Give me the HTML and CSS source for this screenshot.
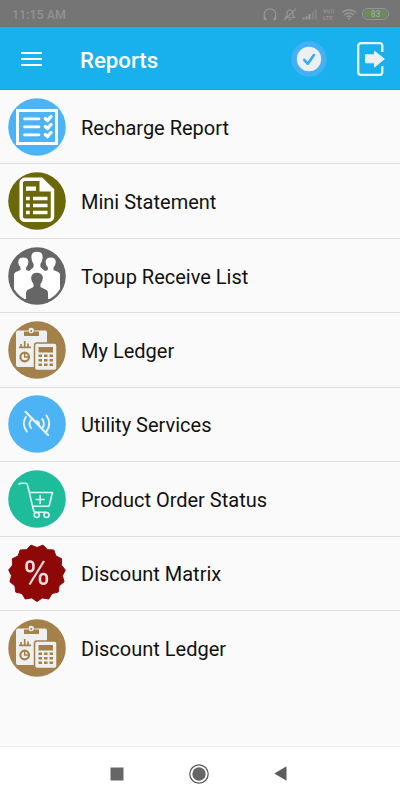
FILE: index.html
```html
<!DOCTYPE html>
<html lang="en">
<head>
    <meta charset="UTF-8">
    <meta name="viewport" content="width=device-width, initial-scale=1.0">
    <title>Reports</title>
    <link rel="stylesheet" href="styles.css">
</head>
<body>
    <!-- Shared icon used by both ledger rows -->
    <svg class="sprite" aria-hidden="true">
        <symbol id="icon-ledger" viewBox="0 0 58 58">
            <circle cx="29" cy="29" r="28.8" fill="#a4814b"/>
            <rect x="8" y="9.5" width="31" height="36.5" rx="2" fill="#ecf0f1"/>
            <path d="M16 10.5h4a3.3 3.3 0 0 1 6.500 0h4.500v4.500H16z" fill="#a4814b"/>
            <circle cx="23.200" cy="9.500" r="2.700" fill="#ecf0f1"/>
            <circle cx="23.200" cy="10" r="1" fill="#a4814b"/>
            <path d="M11 26.400h12M13 26v-3M16.700 26v-6M20 26v-3.500" stroke="#a4814b" stroke-width="1.700"/>
            <circle cx="16.700" cy="36" r="4.300" fill="none" stroke="#a4814b" stroke-width="2.200"/>
            <path d="M16.700 31v5h5" fill="none" stroke="#a4814b" stroke-width="1.500"/>
            <rect x="26.500" y="22" width="22.500" height="27.500" rx="2.500" fill="#ecf0f1" stroke="#a4814b" stroke-width="1.500"/>
            <rect x="30.500" y="26" width="14.500" height="5.500" fill="#a4814b"/>
            <path d="M30.500 34.800h14.500M30.500 39.300h14.500M30.500 43.800h14.500" stroke="#a4814b" stroke-width="2.500" stroke-dasharray="3.500 2"/>
        </symbol>
    </svg>

    <div class="screen">
        <div class="status-bar">
            <span class="clock">11:15 AM</span>
            <div class="status-icons">
                <svg class="headset" width="14" height="13" viewBox="0 0 14 13">
                    <path d="M1.300 9V6a5.700 5.200 0 0 1 11.400 0v3" fill="none" stroke="#969696" stroke-width="1.300"/>
                    <path d="M.8 8.500h1.500l1.700 3.700H1.500l-.9-1zM13.200 8.500h-1.500L10 12.200h2.500l.9-1z" fill="#969696"/>
                </svg>
                <svg width="14" height="13" viewBox="0 0 14 13">
                    <path d="M2.500 9.500L4 7.500V5a3 3 0 0 1 6 0v2.500l1.500 2zM5.500 11.500h3M13 .8L1 12.300" fill="none" stroke="#969696" stroke-width="1.200"/>
                </svg>
                <svg width="16" height="12" viewBox="0 0 16 12">
                    <path d="M1.500 11.500v-2M4.500 11.500V8.300M7.500 11.500V6" stroke="#999" stroke-width="2"/>
                    <path d="M10.700 11.500V3.500M13.800 11.500V1" stroke="#858585" stroke-width="2"/>
                </svg>
                <span class="volte">Vo))<br>LTE</span>
                <svg width="16" height="12" viewBox="0 0 16 12">
                    <path d="M1 4.500a10 10 0 0 1 14 0M3.300 7a6.700 6.700 0 0 1 9.400 0M5.600 9.200a3.500 3.500 0 0 1 4.800 0" fill="none" stroke="#989898" stroke-width="1.500"/>
                    <circle cx="8" cy="10.800" r="1" fill="#989898"/>
                </svg>
                <span class="battery"><span>83</span></span>
            </div>
        </div>

        <header class="app-bar">
            <button class="menu-btn" aria-label="Menu"><span></span><span></span><span></span></button>
            <h1>Reports</h1>
            <svg class="check" width="36" height="36" viewBox="0 0 36 36">
                <circle cx="18" cy="18" r="17.700" fill="#44b0f5"/>
                <circle cx="18" cy="18" r="12.200" fill="#ecf0f1"/>
                <path d="M13.300 19l3.600 3.800 6-8.800" fill="none" stroke="#35acf3" stroke-width="2.600" stroke-linecap="round" stroke-linejoin="round"/>
            </svg>
            <svg class="logout" width="28" height="34" viewBox="0 0 28 34">
                <path d="M25.300 10V3.700a2.500 2.500 0 0 0-2.500-2.500H4a2.800 2.800 0 0 0-2.800 2.800v26a2.800 2.800 0 0 0 2.800 2.800h18.800a2.500 2.500 0 0 0 2.500-2.500V24" fill="none" stroke="#e9f3f6" stroke-width="2.300"/>
                <path d="M8.500 12.800h9V9.300L27.300 17l-9.800 8v-4.200h-9z" fill="#ecf0f1" stroke="#ecf0f1" stroke-linejoin="round"/>
            </svg>
        </header>

        <ul class="report-list">
            <li>
                <svg class="icon" viewBox="0 0 58 58">
                    <circle cx="29" cy="29" r="28.800" fill="#4cb3f5"/>
                    <rect x="9.500" y="12.500" width="39" height="33" fill="none" stroke="#fff" stroke-width="3"/>
                    <path d="M16.500 20.800h14.500M16.500 28.800h14.500M16.500 36.800h14.500" stroke="#fff" stroke-width="2.800" stroke-linecap="round"/>
                    <path d="M37.300 20.500l2.200 2 3.500-4M37.300 28.500l2.200 2 3.500-4M37.300 36.500l2.200 2 3.500-4" fill="none" stroke="#fff" stroke-width="3.300" stroke-linecap="round"/>
                </svg>
                <span>Recharge Report</span>
            </li>
            <li>
                <svg class="icon" viewBox="0 0 58 58">
                    <circle cx="29" cy="29" r="28.800" fill="#6a6808"/>
                    <path d="M17 7.300h16.500L44.500 18v26.500a3.800 3.800 0 0 1-3.800 3.800H17a3.800 3.800 0 0 1-3.800-3.800V11.100A3.800 3.800 0 0 1 17 7.300z" fill="none" stroke="#fff" stroke-width="3.500"/>
                    <path d="M31.500 7v12.500H44v-2.500L34 7z" fill="#fff"/>
                    <path d="M18 14.500h10v4.300H18z" fill="#fff"/>
                    <path d="M18 26.500h3.800M25 26.500h14.500M18 33.500h3.800M25 33.500h14.500M18 40.500h3.800M25 40.500h14.500" stroke="#fff" stroke-width="3.500"/>
                </svg>
                <span>Mini Statement</span>
            </li>
            <li>
                <svg class="icon" viewBox="0 0 58 58">
                    <circle cx="29" cy="29" r="28.800" fill="#666"/>
                    <path d="M6 42V28q0-2.500 3-3.500l3.500-1.500v-2.500q-3-3.500-2-7 .5-3 4.800-3t4.800 3q1 3.500-2 7V23l3 1 3-2.500 1.500-1.500v-3q-3-4.500-2-9 1-3.200 5.400-3.200t5.400 3.200q1 4.500-2 9v3l1.500 1.500 3 2.500 3-1v-2.500q-3-3.500-2-7 .5-3 4.800-3t4.800 3q1 3.500-2 7V23l3.500 1.500q3 1 3 3.500v14q-4 6.500-10.500 10H16.500Q10 48.500 6 42z" fill="#fff"/>
                    <path d="M18 55.500V46q0-3 3.500-4l4-2v-3q-3-4-2.200-7.500 1-3.800 5.700-3.800t5.700 3.800q.8 3.500-2.200 7.500v3l4 2q3.500 1 3.500 4v9.500q-11 3-22 0z" fill="#666"/>
                </svg>
                <span>Topup Receive List</span>
            </li>
            <li>
                <svg class="icon"><use href="#icon-ledger"/></svg>
                <span>My Ledger</span>
            </li>
            <li>
                <svg class="icon" viewBox="0 0 58 58">
                    <circle cx="29" cy="29" r="28.800" fill="#4cb3f5"/>
                    <g fill="none" stroke="#ecf4f8" stroke-width="1.900" stroke-linecap="round">
                        <path d="M17.800 22q-4.500 7 1 14.500M23 25q-3 4 0 8M38.500 20.500q5.500 8 0 16M34.200 24q3.200 4.500.5 8.500"/>
                        <path d="M17.500 16.800L40 40" stroke-width="2.200"/>
                    </g>
                    <path d="M26.500 26q3-2 5 1 .8 1.500 0 3.500z" fill="#ecf4f8"/>
                </svg>
                <span>Utility Services</span>
            </li>
            <li>
                <svg class="icon" viewBox="0 0 58 58">
                    <circle cx="29" cy="29" r="28.800" fill="#1fbc9c"/>
                    <g fill="none" stroke="#e2f5f1" stroke-width="1.600" stroke-linecap="round" stroke-linejoin="round">
                        <path d="M11 14l2-.8h4.500q1.500 0 2 1.800l6 25.200q.5 2 2.500 2h10.500M22 22.500h22.500L41 36.200H25.500"/>
                        <path d="M32.200 25.500v8M28.200 29.500h8"/>
                        <circle cx="28.700" cy="45" r="2.500"/>
                        <circle cx="38.500" cy="45" r="2.500"/>
                    </g>
                </svg>
                <span>Product Order Status</span>
            </li>
            <li>
                <svg class="icon" viewBox="0 0 58 58">
                    <path d="M29 57.500L34.300 53.900 40.700 55 44 49.600 50.200 48.100 51.100 41.800 56.100 37.800 54.400 31.700 57.300 26 53.300 21.100 53.700 14.800 47.900 11.900 45.800 6 39.400 5.700 35 1.100 29 3.500 23 1.100 18.600 5.700 12.200 6 10.100 11.900 4.300 14.800 4.700 21.100 .7 26 3.600 31.700 1.900 37.800 6.900 41.800 7.800 48.100 14 49.600 17.300 55 23.700 53.900z" fill="#8f0808" stroke="#8f0808" stroke-linejoin="round"/>
                    <g fill="none" stroke="#f0dcdc" stroke-width="2.600">
                        <rect x="18.600" y="17.500" width="6.800" height="9.800" rx="3.300"/>
                        <rect x="32" y="30" width="6.800" height="9.800" rx="3.300"/>
                        <path d="M36 17L21.500 40.500" stroke-width="2.200"/>
                    </g>
                </svg>
                <span>Discount Matrix</span>
            </li>
            <li>
                <svg class="icon"><use href="#icon-ledger"/></svg>
                <span>Discount Ledger</span>
            </li>
        </ul>

        <nav class="nav-bar">
            <svg width="14" height="14" viewBox="0 0 14 14"><rect x=".5" y=".5" width="13" height="13" fill="#666"/></svg>
            <svg width="20" height="20" viewBox="0 0 20 20">
                <circle cx="10" cy="10" r="9.200" fill="none" stroke="#555" stroke-width="1.200"/>
                <circle cx="10" cy="10" r="6.700" fill="#666"/>
            </svg>
            <svg width="13" height="15" viewBox="0 0 13 15"><path d="M12.500 .3v14.400L.3 7.500z" fill="#5c5c5c"/></svg>
        </nav>
    </div>
</body>
</html>
```
FILE: styles.css
```css
* {
    margin: 0;
    padding: 0;
    box-sizing: border-box;
}

body {
    font-family: Roboto, 'Liberation Sans', sans-serif;
    background: #fafafa;
}

svg {
    display: block;
    flex-shrink: 0;
}

.sprite {
    display: none;
}

.screen {
    display: flex;
    flex-direction: column;
    width: 400px;
    height: 800px;
}

/* Status bar */
.status-bar {
    display: flex;
    justify-content: space-between;
    align-items: center;
    height: 27px;
    padding: 1px 11px 0 12px;
    background: #757575;
    color: #929292;
}

.clock {
    font-size: 12.5px;
    font-weight: 500;
    line-height: 15px;
}

.status-icons {
    display: flex;
    align-items: center;
    gap: 5px;
}

.headset {
    margin-right: 1px;
}

.volte {
    width: 13px;
    font-size: 6px;
    font-weight: 700;
    line-height: 7px;
    white-space: nowrap;
}

.battery {
    width: 27px;
    height: 12px;
    padding: 1px;
    border: 1px solid #969696;
    border-radius: 6px;
}

.battery span {
    display: block;
    height: 8px;
    border-radius: 4px;
    background: #6b8a5d;
    color: #a0a69c;
    font-size: 8.5px;
    font-weight: 500;
    line-height: 8.5px;
    text-align: center;
}

/* App bar */
.app-bar {
    display: flex;
    align-items: center;
    height: 63px;
    padding: 0 15px 0 21px;
    background: #18b1ed;
    border-bottom: 1px solid #16a7df;
}

.menu-btn {
    display: flex;
    flex-direction: column;
    gap: 4px;
    width: 21px;
    margin-top: 1px;
    background: none;
    border: none;
}

.menu-btn span {
    height: 2px;
    background: #fff;
}

.app-bar h1 {
    flex: 1;
    margin: 4px 0 0 38px;
    color: #fff;
    font-size: 22.2px;
    font-weight: 500;
}

.check {
    margin: 1px 30px 0 0;
}

.logout {
    margin-top: 1px;
}

/* Report list */
.report-list {
    flex: 1;
    list-style: none;
    background: #fafafa;
}

.report-list li {
    display: flex;
    align-items: center;
    gap: 15px;
    height: 74.45px;
    padding-left: 8px;
    border-bottom: 1px solid #dedede;
    color: #111;
    font-size: 20px;
}

.report-list li:last-child {
    border-bottom: none;
}

.report-list li span {
    margin-top: 2px;
}

.icon {
    width: 58px;
    height: 58px;
}

/* System navigation */
.nav-bar {
    display: flex;
    justify-content: space-between;
    align-items: center;
    height: 54px;
    padding: 0 113px 0 110px;
    background: #fff;
    border-top: 1px solid #f0f0f0;
}
```
